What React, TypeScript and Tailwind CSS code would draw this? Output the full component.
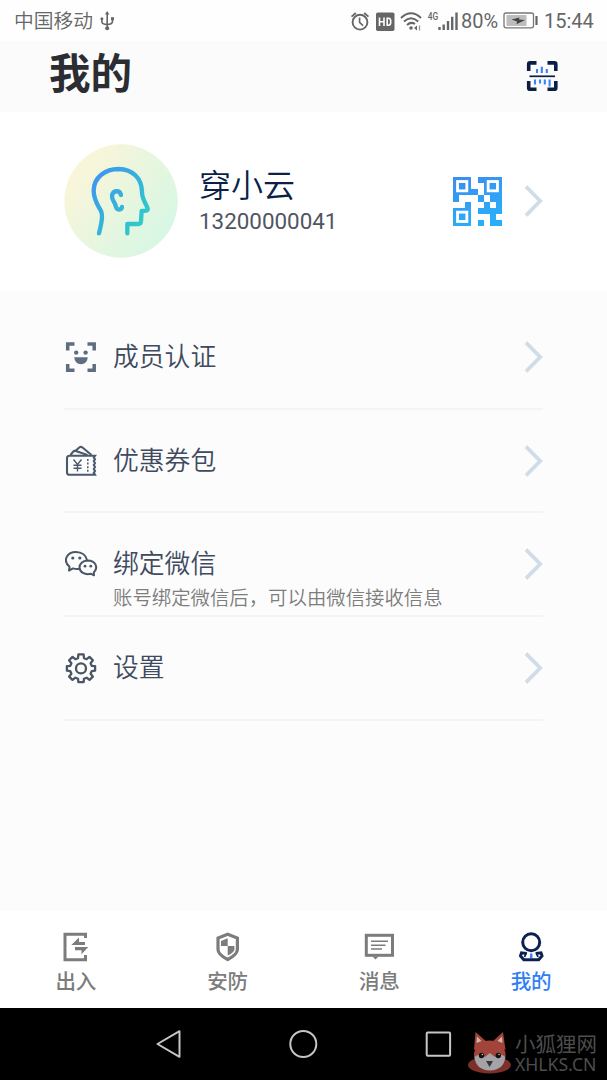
import type { ReactNode } from 'react';

const CJK = "font-['Noto_Sans_CJK_SC',sans-serif]";
const ROBOTO = "font-['Roboto','Noto_Sans_CJK_SC',sans-serif]";

// 8 x 8 modules, without the holes of the finder squares
const QR_ROWS = [
  '11101111',
  '11100111',
  '11110111',
  '10001011',
  '00100101',
  '11101111',
  '11100010',
  '11101011',
];

function StatusIcons() {
  return (
    <svg className="block shrink-0" width="109" height="24" viewBox="350 8 109 24" fill="none" stroke="#666">
      <circle cx="360" cy="21.2" r="7.4" strokeWidth="1.9" />
      <path d="M359.6 16.5V21.4L363 24.6" strokeWidth="1.6" />
      <path d="M351.5 15.6L355.8 12M368.5 15.6L364.2 12" strokeWidth="1.8" />
      <rect x="376" y="11.5" width="18.5" height="18.5" rx="1.8" fill="#666" stroke="none" />
      <path d="M379.5 16.5V25M384 16.5V25M379.5 20.7H384" stroke="#fff" strokeWidth="1.6" />
      <path d="M387.2 17.3H388.6C391.5 17.3 391.5 24.2 388.6 24.2H387.2Z" stroke="#fff" strokeWidth="1.6" />
      <path d="M401 17Q411 7.5 421 17M404 20.6Q411 14 418.2 20.6M407 24Q411 20.3 415 23" strokeWidth="2" />
      <circle cx="411" cy="27" r="1.8" fill="#666" stroke="none" />
      <path d="M414 27L417 24.5V29.5Z" fill="#666" stroke="none" />
      <path d="M419.5 24.5V29.5" stroke="#999" strokeWidth="1.3" />
      <path
        d="M439.5 26V29M443.7 23.5V29M448 20V29M452.2 15.8V29M456.5 11.5V29"
        strokeWidth="2.4"
      />
      <text x="427.7" y="19" fontFamily="Roboto" fontSize="10.5" fontWeight="500" fill="#666" stroke="none" textLength="10.5" lengthAdjust="spacingAndGlyphs">
        4G
      </text>
    </svg>
  );
}

function Battery() {
  return (
    <svg className="ml-[5px] block shrink-0" width="36" height="18" viewBox="503 12 36 18">
      <rect x="504" y="13" width="29.5" height="14.8" rx="2" fill="#fff" stroke="#777" strokeWidth="1.3" />
      <rect x="506.5" y="15" width="20" height="11" fill="#bdbdbd" />
      <path d="M511.5 19.5L519.5 17.5L519 19.5L525 20L516.5 24.3L517 21.4Z" fill="#444" />
      <path d="M536.5 16V25" stroke="#666" strokeWidth="2.2" />
    </svg>
  );
}

function StatusBar() {
  return (
    <div className={`flex h-[41px] items-center bg-[#fefefe] pl-[14px] text-[20px] text-[#666] ${ROBOTO}`}>
      <span className="pt-[2px] text-[19.8px] font-[350] leading-[41px]">中国移动</span>
      <svg className="ml-[7px] block" width="14" height="20" viewBox="100 11 14 20" fill="none" stroke="#666" strokeWidth="1.6">
        <path d="M107.2 12.5V28M101.9 19V21.5Q101.9 24.5 107.2 24.5Q112.5 24.5 112.5 21V19" />
        <path d="M107.2 11L109.4 14.6H105Z" fill="#666" stroke="none" />
        <circle cx="107.2" cy="28.2" r="2" fill="#666" stroke="none" />
        <circle cx="101.9" cy="18.8" r="1.5" fill="#666" stroke="none" />
        <path d="M111 17.2H114V20.2H111Z" fill="#666" stroke="none" />
      </svg>
      <div className="ml-auto flex items-center pr-[13px]">
        <StatusIcons />
        <span className="ml-[2px] w-[37px] whitespace-nowrap pt-px leading-[41px]">80%</span>
        <Battery />
        <span className="ml-[5px] w-[50px] whitespace-nowrap pt-px leading-[41px]">15:44</span>
      </div>
    </div>
  );
}

function ScanIcon() {
  return (
    <svg className="block" width="32" height="32" viewBox="526 60 32 32" fill="none">
      <path
        d="M528.7 71V64.2Q528.7 62.9 530 62.9H536.5M547.5 62.9H554.5Q555.8 62.9 555.8 64.2V71M555.8 81V88Q555.8 89.3 554.5 89.3H547.5M536.5 89.3H530Q528.7 89.3 528.7 88V81"
        stroke="#0b1f45"
        strokeWidth="3.6"
      />
      <path d="M529.5 76.3H555" stroke="#0b1f45" strokeWidth="1.7" />
      <path
        d="M537 69V73M541.8 66.8V73M546.8 69V73M535 79.5V84.5M540 79.5V83.5M544.8 79.5V84.5M549.6 79.5V86.5"
        stroke="#3b82f6"
        strokeWidth="2.1"
      />
    </svg>
  );
}

function Avatar() {
  return (
    <svg className="block shrink-0" width="114" height="114" viewBox="44 41 342 342" fill="none">
      <defs>
        <linearGradient id="disc" x1="0" y1="0.1" x2="1" y2="0.85">
          <stop offset="0.05" stopColor="#fdf5d8" />
          <stop offset="1" stopColor="#d3f7e6" />
        </linearGradient>
        <linearGradient id="head" gradientUnits="userSpaceOnUse" x1="130" y1="150" x2="290" y2="270">
          <stop offset="0" stopColor="#3d97ee" />
          <stop offset="1" stopColor="#30cbc8" />
        </linearGradient>
      </defs>
      <circle cx="215" cy="212" r="170" fill="url(#disc)" />
      <g stroke="url(#head)" strokeWidth="13" strokeLinecap="round" strokeLinejoin="round">
        <path d="M149 309C153 289 164 260 155 242C145 223 133 210 133 180C134 141 168 116 208 116C251 117 277 145 278 184C277 206 290 218 295 235C296 240 292 242 277 242L275 273Q274 282 265 281H234V309" />
        <path d="M215 194C211 178 190 179 188 197C187 210 198 215 200 230C203 241 217 239 218 230" />
      </g>
    </svg>
  );
}

function QrCode() {
  return (
    <svg className="block shrink-0" width="49" height="49" viewBox="0 0 8 8">
      <defs>
        <linearGradient id="qr" gradientUnits="userSpaceOnUse" x1="0" y1="0" x2="3" y2="8">
          <stop offset="0" stopColor="#3c8cf0" />
          <stop offset="1" stopColor="#2aaef8" />
        </linearGradient>
      </defs>
      <g fill="url(#qr)" shapeRendering="crispEdges">
        {QR_ROWS.map((row, y) =>
          row
            .split('')
            .map((cell, x) => (cell === '1' ? <path key={`${x}-${y}`} d={`M${x} ${y}h1v1h-1z`} /> : null))
        )}
      </g>
      {[
        [0, 0],
        [5, 0],
        [0, 5],
      ].map(([x, y]) => (
        <rect
          key={`${x}-${y}`}
          x={x + 0.74}
          y={y + 0.74}
          width="1.52"
          height="1.52"
          fill="none"
          stroke="#fff"
          strokeWidth="0.46"
        />
      ))}
    </svg>
  );
}

function Chevron() {
  return (
    <svg className="block shrink-0" width="18" height="32" viewBox="0 0 18 32" fill="none">
      <path d="M1 1.5L15.2 16L1 30.5" stroke="#d0dce8" strokeWidth="3.8" />
    </svg>
  );
}

function FaceIcon() {
  return (
    <svg width="32" height="32" viewBox="65 341 32 32" fill="none">
      <path
        d="M67.7 350.5V343.9H74.5M87.5 343.9H94.2V350.5M94.2 364V370.3H87.5M74.5 370.3H67.7V364"
        stroke="#5f6d80"
        strokeWidth="3.5"
      />
      <circle cx="76.2" cy="352.6" r="2.2" fill="#5f6d80" />
      <circle cx="85.6" cy="352.6" r="2.2" fill="#5f6d80" />
      <path d="M74.3 357.3H87.7C87.4 366.5 74.6 366.5 74.3 357.3Z" fill="#5f6d80" />
    </svg>
  );
}

function CouponIcon() {
  return (
    <svg width="32" height="32" viewBox="65 445 32 32" fill="none" stroke="#4a5a6c" strokeWidth="2.1">
      <path d="M95 455.8H69.5Q67 455.8 67 458.3V472.2Q67 474.8 69.5 474.8H95L93.8 472.8L95 471L93.8 469L95 467L93.8 465L95 463L93.8 461L95 459.3L93.8 457.5Z" />
      <path d="M75 451.3L79.5 447.3Q80.8 446.3 82.2 447.3L91.5 455M70.5 455L73 451.8Q74 450.5 75.8 451L87.5 455" />
      <path d="M73.5 459.5L77.5 464.5L81.5 459.5M77.5 464.5V471.5M73.5 465.3H81.5M73.5 468.3H81.5" strokeWidth="1.4" />
      <path d="M87.8 459V472" strokeWidth="1.5" strokeDasharray="2 1.6" />
    </svg>
  );
}

function WechatIcon() {
  return (
    <svg width="34" height="32" viewBox="65 549 34 32" fill="none" stroke="#4a5666" strokeWidth="2" strokeLinejoin="round">
      <path d="M79 570Q76 570.4 73 569.4L69 571.5L69.5 567.8C62 561 67.5 553 76 553C82 553 86 556.5 87 561" />
      <path d="M87.6 561.5C82.5 561.8 79.5 565 79.5 568.6C79.8 573 84.5 576.4 91 574.8L94 576.3L93.8 573.4C98.5 568.5 95.8 561.7 87.6 561.5Z" />
      <g fill="#4a5666" stroke="none">
        <circle cx="72.8" cy="559" r="1.6" />
        <circle cx="79.8" cy="559" r="1.6" />
        <circle cx="85" cy="567.2" r="1.4" />
        <circle cx="90.8" cy="567.2" r="1.4" />
      </g>
    </svg>
  );
}

function GearIcon() {
  return (
    <svg width="32" height="32" viewBox="0 0 32 32" fill="none" stroke="#4a5666" strokeWidth="2.3" strokeLinejoin="round">
      <path d="M13.4 2.4H18.6L19 6.2L21.6 7.2L24.5 4.9L27.9 8.3L25.6 11.2L26.7 13.8L30.1 14.1V18.7L26.7 19.1L25.6 21.7L27.9 24.6L24.5 27.9L21.6 25.7L19 26.7L18.6 30.2H13.4L13 26.7L10.4 25.7L7.5 27.9L4.1 24.6L6.4 21.7L5.3 19.1L1.9 18.7V14.1L5.3 13.8L6.4 11.2L4.1 8.3L7.5 4.9L10.4 7.2L13 6.2Z" />
      <circle cx="16" cy="16.4" r="5" />
    </svg>
  );
}

interface MenuRowProps {
  icon: ReactNode;
  label: string;
  hint?: string;
}

function MenuRow({ icon, label, hint }: MenuRowProps) {
  return (
    <div className="flex h-[103.7px] items-start border-b-2 border-[#f4f4f4] pt-[31px]">
      <div className="flex h-10 w-[49px] shrink-0 items-center pl-px">{icon}</div>
      <div className="flex-1 whitespace-nowrap font-[350]">
        <div className="text-[25.8px] leading-[36px] text-[#3f4a5f]">{label}</div>
        {hint && <div className="mt-[5px] text-[19.4px] leading-6 text-[#7d7d7d]">{hint}</div>}
      </div>
      <div className="flex h-10 items-center">
        <Chevron />
      </div>
    </div>
  );
}

function DoorIcon() {
  return (
    <svg width="32" height="32" viewBox="61 931 32 32" fill="none">
      <path d="M86.5 938V934.3H66V959.7H86.5V955" stroke="#7c7c7c" strokeWidth="3" />
      <path d="M72.3 945L80 937.6V942H86V945Z" fill="#7c7c7c" />
      <path d="M89.3 947L82.5 954.3V950.3H76V947Z" fill="#7c7c7c" />
    </svg>
  );
}

function ShieldIcon() {
  return (
    <svg width="32" height="32" viewBox="212 931 32 32" fill="none">
      <path d="M227.7 934.2L237.4 938V949.5Q237.4 954.5 227.7 959.5Q218 954.5 218 949.5V938Z" stroke="#7c7c7c" strokeWidth="3.2" />
      <path d="M227.7 938.3V946H221V941Z" fill="#7c7c7c" />
      <path d="M227.7 946H234.4V949.5Q233.5 953 227.7 955.5Z" fill="#7c7c7c" />
    </svg>
  );
}

function MessageIcon() {
  return (
    <svg width="32" height="32" viewBox="363 931 32 32" fill="none" stroke="#7c7c7c">
      <rect x="366.3" y="935.3" width="26.2" height="20" strokeWidth="3" />
      <path d="M372.5 956.5H378.5L375.5 959.6Z" fill="#7c7c7c" stroke="none" />
      <path d="M371 941.3H388M371 945.2H385.5M371 949H382" strokeWidth="1.5" />
    </svg>
  );
}

function MeIcon() {
  return (
    <svg width="32" height="32" viewBox="515 931 32 32" fill="none">
      <circle cx="531.2" cy="942.3" r="8.5" stroke="#0b2250" strokeWidth="3" />
      <path d="M526.5 953.5L521.5 952.8L520.5 956L523.8 959.8H538.7L542 956L541 952.8L536 953.5" stroke="#0b2250" strokeWidth="3" />
      <path d="M526.5 952.3L524.5 957M536 952.3L538 957" stroke="#0b2250" strokeWidth="1.8" />
      <path d="M531.2 953.5V958" stroke="#3b82f6" strokeWidth="2.5" />
    </svg>
  );
}

const tabs = [
  { label: '出入', icon: <DoorIcon />, active: false },
  { label: '安防', icon: <ShieldIcon />, active: false },
  { label: '消息', icon: <MessageIcon />, active: false },
  { label: '我的', icon: <MeIcon />, active: true },
];

function FoxLogo() {
  return (
    <svg className="block shrink-0" width="46" height="46" viewBox="466 1031 46 46">
      <ellipse cx="489.5" cy="1066" rx="21.5" ry="8.5" fill="#7b3029" />
      <path d="M474 1051L475.5 1033L488 1044Z" fill="#a2443a" />
      <path d="M505.5 1051L503 1033L491 1044Z" fill="#a2443a" />
      <path d="M476.5 1044L477 1037.5L481.5 1042Z" fill="#cdb7a8" />
      <path d="M502.5 1044L502 1037.5L497.5 1042Z" fill="#cdb7a8" />
      <ellipse cx="489.8" cy="1056" rx="15.8" ry="14.5" fill="#a2443a" />
      <path d="M474.5 1058Q480 1053 485 1058L489.8 1054L495 1058Q500 1053 505.3 1058Q504 1071 489.8 1071.5Q476 1071 474.5 1058Z" fill="#a3a3a8" />
      <circle cx="481.5" cy="1056.5" r="2.7" fill="#111" />
      <circle cx="498.3" cy="1056.5" r="2.7" fill="#111" />
      <circle cx="482.3" cy="1055.5" r="0.7" fill="#ddd" />
      <circle cx="499" cy="1055.5" r="0.7" fill="#ddd" />
      <path d="M486 1062H493L489.6 1068Z" fill="#383536" />
    </svg>
  );
}

function SystemNav() {
  return (
    <div className="flex h-[72px] items-center bg-black">
      <svg className="ml-[155px] block shrink-0" width="300" height="34" viewBox="155 1027 300 34" fill="none" stroke="#c6c6c6" strokeWidth="2" strokeLinejoin="round">
        <path d="M157.5 1044L179.5 1031.2V1056.8Z" />
        <circle cx="303.3" cy="1044" r="13" />
        <rect x="426.7" y="1032.4" width="23.4" height="23.4" rx="1" />
      </svg>
      <div className="ml-[11px] flex items-center gap-[3px] pt-[18px]">
        <FoxLogo />
        <div className={`whitespace-nowrap text-[#4d4d4d] ${CJK}`}>
          <div className="text-[20.5px] leading-[22px]">小狐狸网</div>
          <div className="text-[17.6px] leading-[20px] font-['Noto_Sans',sans-serif]">XHLKS.CN</div>
        </div>
      </div>
    </div>
  );
}

export default function App() {
  return (
    <div className={`flex h-[1080px] w-[607px] flex-col overflow-hidden bg-[#fcfcfc] ${CJK}`}>
      <StatusBar />
      <header className="flex h-[71px] items-start justify-between bg-[#fbfbfb] pl-[49px] pr-[49px]">
        <h1 className="text-[41.5px] font-bold leading-[61px] text-[#2b2d33]">我的</h1>
        <div className="pt-[19px]">
          <ScanIcon />
        </div>
      </header>

      <section className="flex h-[178px] items-center bg-white pl-[64px] pr-[64px]">
        <Avatar />
        <div className="ml-[21px] flex-1">
          <div className="text-[32px] font-[350] leading-[34px] text-[#0c1f47]">穿小云</div>
          <div className={`pt-[5px] text-[22.4px] leading-[32px] text-[#50565f] ${ROBOTO}`}>13200000041</div>
        </div>
        <QrCode />
        <div className="ml-[23px]">
          <Chevron />
        </div>
      </section>

      <main className="flex-1 px-[64px] pt-[16px]">
        <MenuRow icon={<FaceIcon />} label="成员认证" />
        <MenuRow icon={<CouponIcon />} label="优惠券包" />
        <MenuRow icon={<WechatIcon />} label="绑定微信" hint="账号绑定微信后，可以由微信接收信息" />
        <MenuRow icon={<GearIcon />} label="设置" />
      </main>

      <nav className="grid h-[97px] grid-cols-4 bg-white pt-5">
        {tabs.map((tab) => (
          <div key={tab.label} className="flex flex-col items-center">
            {tab.icon}
            <span
              className={`text-[20.5px] font-medium leading-[34px] ${tab.active ? 'text-[#2f80f5]' : 'text-[#7c7c7c]'}`}
            >
              {tab.label}
            </span>
          </div>
        ))}
      </nav>
      <SystemNav />
    </div>
  );
}
